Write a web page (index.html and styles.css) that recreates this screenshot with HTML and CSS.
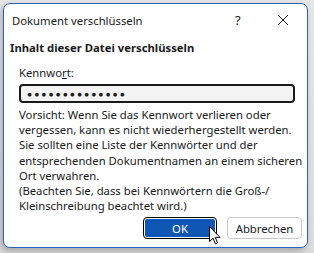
FILE: index.html
```html
<!DOCTYPE html>
<html lang="de">
<head>
<meta charset="utf-8">
<link rel="stylesheet" href="styles.css">
</head>
<body>
<div class="window">
  <div class="titlebar">
    <span class="title">Dokument verschlüsseln</span>
    <span class="help">?</span>
    <span class="close">
      <svg width="12" height="12" viewBox="0 0 12 12"><path d="M1 1L11 11M11 1L1 11" stroke="#1a1a1a" stroke-width="1"/></svg>
    </span>
  </div>
  <div class="content">
    <div class="heading">Inhalt dieser Datei verschlüsseln</div>
    <div class="group">
      <div class="label">Kennwo<u>r</u>t:</div>
      <div class="input">●●●●●●●●●●●●●●</div>
      <div class="note">Vorsicht: Wenn Sie das Kennwort verlieren oder<br>vergessen, kann es nicht wiederhergestellt werden.<br>Sie sollten eine Liste der Kennwörter und der<br>entsprechenden Dokumentnamen an einem sicheren<br>Ort verwahren.<br>(Beachten Sie, dass bei Kennwörtern die Groß-/<br>Kleinschreibung beachtet wird.)</div>
    </div>
    <div class="buttons">
      <div class="btn primary"><span>OK</span></div>
      <div class="btn">Abbrechen</div>
    </div>
  </div>
  <svg class="cursor" width="14" height="20" viewBox="0 0 14 20"><path d="M0.5 0.5L0.5 15.5L4 12.2L6.4 17.8L8.6 16.9L6.3 11.4L11 11.4Z" fill="#fff" stroke="#000" stroke-width="1" stroke-linejoin="miter"/></svg>
</div>
</body>
</html>
```
FILE: styles.css
```css
html, body { margin: 0; padding: 0; }
body {
  width: 314px; height: 253px; overflow: hidden;
  background: linear-gradient(to bottom, #e6e6e6, #dcdcdc);
  font-family: "Noto Sans", "Open Sans", sans-serif;
  color: #1a1a1a;
}
.window {
  position: relative;
  margin: 3px 0 0 3px;
  width: 305px; height: 245px;
  background: #fff;
  border: 1px solid #2b64c8;
  border-radius: 7px;
  box-shadow: -2px 3px 6px rgba(0,0,0,0.25);
  box-sizing: border-box;
}
.titlebar {
  height: 32px;
  display: flex; align-items: center;
  padding-left: 8px;
  font-size: 11.3px;
}
.title { flex: 1; }
.help { width: 12px; margin-right: 30px; font-size: 13px; }
.close { width: 12px; margin-right: 18px; display: flex; }
.content { padding: 4px 0 0 6px; font-size: 11.3px; }
.heading { font-weight: bold; height: 20px; }
.group { padding: 5px 0 0 9px; }
.label { line-height: 15px; }
.label u { text-decoration: underline; }
.input {
  margin-top: 4px;
  width: 276px; height: 19px;
  box-sizing: border-box;
  border: 2px solid #1a1a1a;
  border-radius: 4px;
  background: #f3f3f3;
  font-size: 8.5px; letter-spacing: 2px;
  line-height: 15px;
  padding-left: 6px;
  color: #1a1a1a;
  white-space: nowrap;
}
.note { margin-top: 4px; line-height: 15.2px; white-space: nowrap; }
.buttons {
  display: flex; justify-content: flex-end; gap: 10px;
  margin-top: 4px; padding-right: 5px;
}
.btn {
  width: 75px; height: 22px; box-sizing: border-box;
  border: 1px solid #c8c8c8; border-radius: 4px;
  display: flex; align-items: center; justify-content: center;
  background: #fff;
}
.btn.primary {
  width: 74px;
  border: 1px solid #000;
  background: #fff;
  padding: 1px;
}
.btn.primary span {
  flex: 1; align-self: stretch;
  background: #0f57b4;
  color: #fff;
  border-radius: 2px;
  display: flex; align-items: center; justify-content: center;
}
.cursor { position: absolute; left: 205px; top: 222px; }
```
